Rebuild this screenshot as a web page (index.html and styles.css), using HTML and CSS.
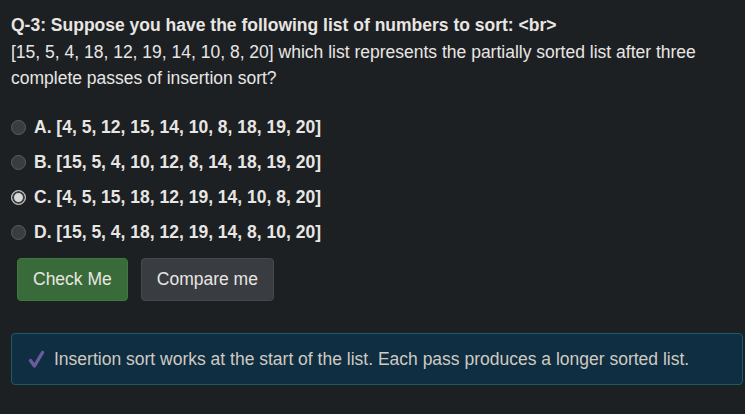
FILE: index.html
```html
<!DOCTYPE html>
<html>
<head>
<meta charset="utf-8">
<link rel="stylesheet" href="styles.css">
</head>
<body>
<div class="card">
  <div class="question">
    <div class="q-title">Q-3: Suppose you have the following list of numbers to sort: &lt;br&gt;</div>
    <div class="q-body">[15, 5, 4, 18, 12, 19, 14, 10, 8, 20] which list represents the partially sorted list after three complete passes of insertion sort?</div>
  </div>
  <form class="options">
    <label class="option"><input type="radio" name="q3" class="radio"><span>A. [4, 5, 12, 15, 14, 10, 8, 18, 19, 20]</span></label>
    <label class="option"><input type="radio" name="q3" class="radio"><span>B. [15, 5, 4, 10, 12, 8, 14, 18, 19, 20]</span></label>
    <label class="option"><input type="radio" name="q3" class="radio" checked><span>C. [4, 5, 15, 18, 12, 19, 14, 10, 8, 20]</span></label>
    <label class="option"><input type="radio" name="q3" class="radio"><span>D. [15, 5, 4, 18, 12, 19, 14, 8, 10, 20]</span></label>
  </form>
  <div class="buttons">
    <button class="btn btn-green" type="button">Check Me</button>
    <button class="btn btn-gray" type="button">Compare me</button>
  </div>
  <div class="feedback">
    <svg class="check" width="17" height="18" viewBox="0 0 17 18"><path d="M2.5 10.5 L6.5 16 L14.5 2.5" fill="none" stroke="#6b5aa0" stroke-width="3.4" stroke-linecap="round" stroke-linejoin="round"/></svg>
    <span>Insertion sort works at the start of the list. Each pass produces a longer sorted list.</span>
  </div>
</div>
</body>
</html>
```
FILE: styles.css
```css
html, body {
  margin: 0;
  padding: 0;
  background: #1d2023;
}
body {
  font-family: "Liberation Sans", Arial, sans-serif;
  font-size: 17.5px;
  color: #e8e6e3;
}
.card {
  padding: 12px 0 0 0;
}
.question {
  padding: 0 11px;
  line-height: 26px;
}
.q-title {
  font-weight: bold;
  margin-bottom: 1px;
}
.options {
  margin-top: 19px;
  padding-left: 11px;
  display: flex;
  flex-direction: column;
}
.option {
  display: flex;
  align-items: center;
  height: 35px;
  font-weight: bold;
}
.radio {
  appearance: none;
  -webkit-appearance: none;
  width: 15px;
  height: 15px;
  margin: 0 8px 0 0;
  border-radius: 50%;
  background: #3a3d40;
  border: 1px solid #5a5d60;
  box-sizing: border-box;
  flex: none;
}
.radio:checked {
  background: #d8d8d8;
  border: 1px solid #c4c4c4;
  box-shadow: inset 0 0 0 2px #3a3d40;
}
.buttons {
  display: flex;
  gap: 13px;
  margin-top: 8px;
  padding-left: 17px;
}
.btn {
  font-family: "Liberation Sans", Arial, sans-serif;
  font-size: 17.5px;
  color: #e8e6e3;
  height: 43px;
  padding: 0 15px;
  border-radius: 4px;
  cursor: pointer;
}
.btn-green {
  background: #386b39;
  border: 1px solid #3e7a3f;
}
.btn-gray {
  background: #393c40;
  border: 1px solid #45484c;
}
.feedback {
  margin: 32px 2px 0 11px;
  height: 52px;
  box-sizing: border-box;
  background: #0f2e41;
  border: 1px solid #1d5a6c;
  border-radius: 4px;
  display: flex;
  align-items: center;
  padding-left: 16px;
  gap: 9px;
  color: #cfcac2;
}
.check {
  flex: none;
}
```
